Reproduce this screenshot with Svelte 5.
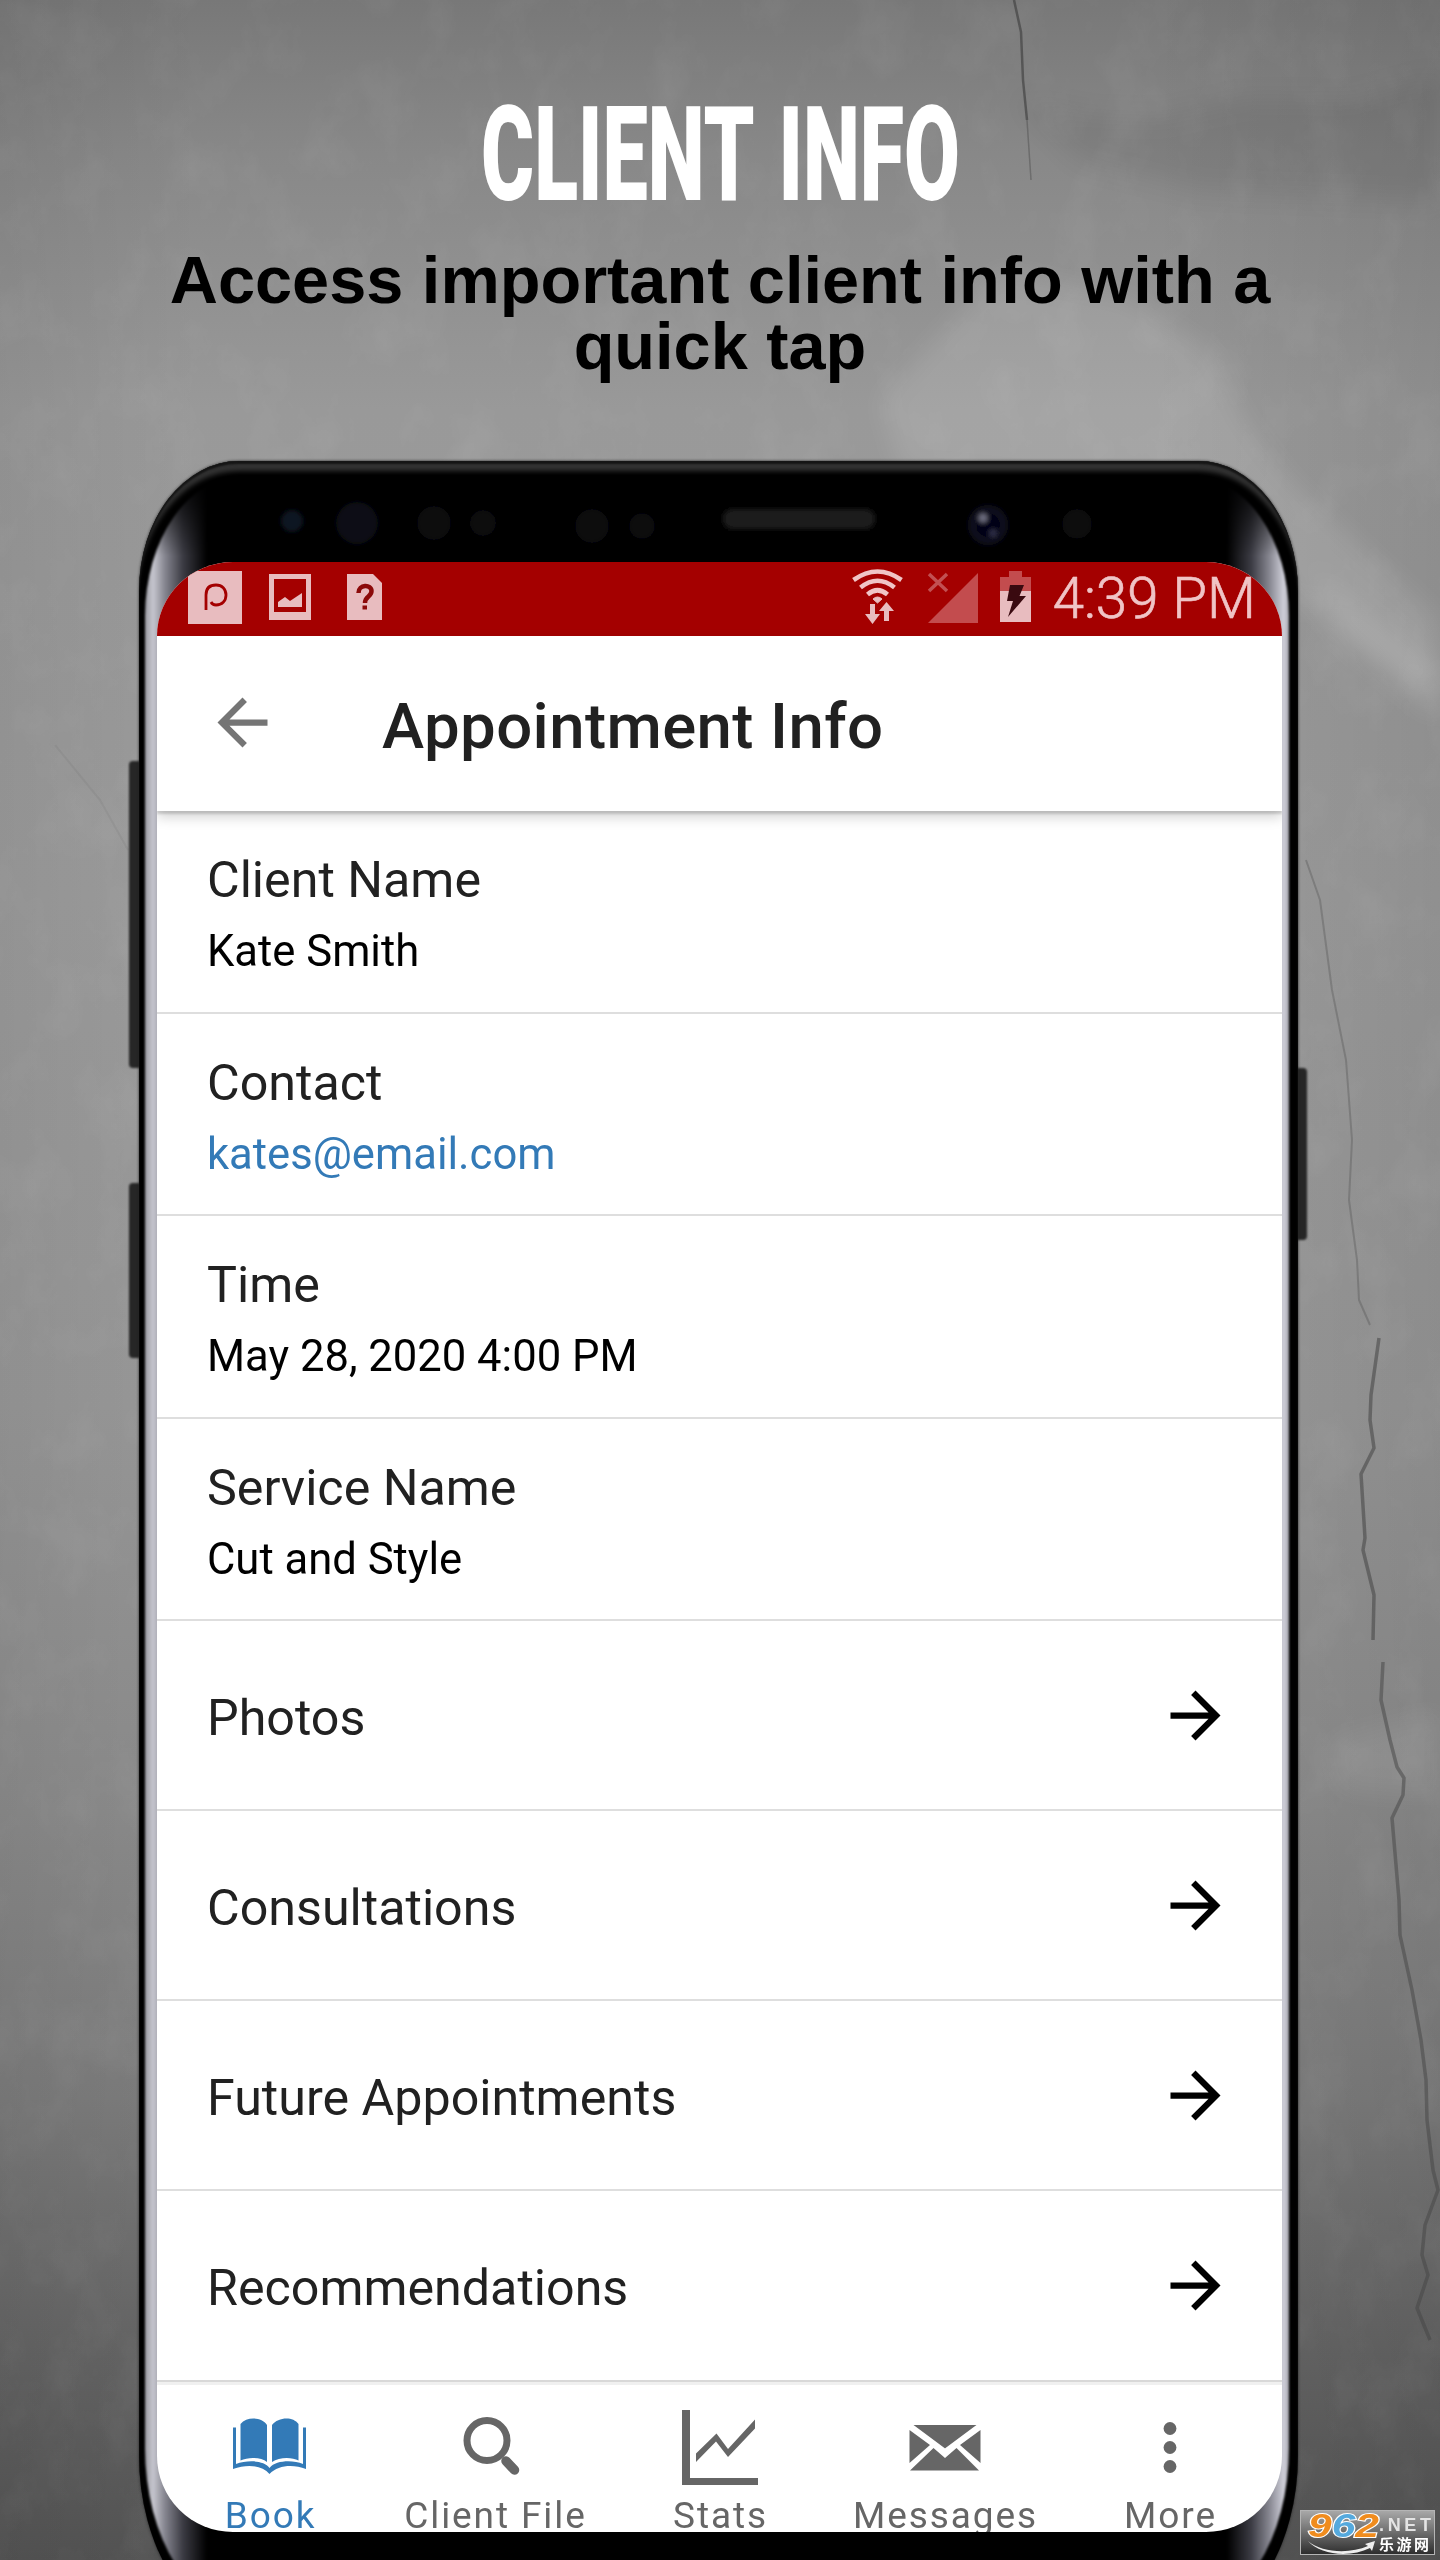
<script lang="ts">
	const details = [
		{ label: 'Client Name', value: 'Kate Smith' },
		{ label: 'Contact', value: 'kates@email.com', link: true },
		{ label: 'Time', value: 'May 28, 2020 4:00 PM' },
		{ label: 'Service Name', value: 'Cut and Style' }
	];

	const sections = ['Photos', 'Consultations', 'Future Appointments', 'Recommendations'];

	const tabs = ['Book', 'Client File', 'Stats', 'Messages', 'More'];

	// front sensors in the top bezel, relative to the phone body
	const sensors = [
		{ x: 153, y: 46, r: 11, color: '#0b1420' },
		{ x: 218, y: 48, r: 21, color: '#090d17' },
		{ x: 295, y: 48, r: 17, color: '#08080f' },
		{ x: 344, y: 48, r: 13, color: '#09090f' },
		{ x: 453, y: 51, r: 17, color: '#08080e' },
		{ x: 503, y: 51, r: 13, color: '#08080d' },
		{ x: 938, y: 49, r: 15, color: '#08080b' }
	];
</script>

<div class="page">
	<svg class="wall" viewBox="0 0 1440 2560" aria-hidden="true">
		<defs>
			<filter id="soft" x="-50%" y="-50%" width="200%" height="200%">
				<feGaussianBlur stdDeviation="12" />
			</filter>
			<filter id="grain" x="0" y="0" width="100%" height="100%">
				<feTurbulence type="fractalNoise" baseFrequency="0.02 0.014" numOctaves="6" seed="8" />
				<feColorMatrix values="0 0 0 0 1  0 0 0 0 1  0 0 0 0 1  1.2 0 0 0 -0.5" />
			</filter>
		</defs>
		<g filter="url(#soft)" fill="#fff">
			<path d="M880 400L1000 270L1130 300L1210 350L1245 420L1290 480L1440 620V700L1330 620L1200 500L900 470Z" opacity="0.11" />
			<path d="M1310 575L1440 665V720L1340 640Z" opacity="0.12" />
			<path d="M1330 1740L1440 1710V1800L1340 1790Z" opacity="0.07" />
			<path d="M1020 100L1090 115L1160 118L1250 98L1350 100L1440 75V200L1200 190L1080 160Z" fill="#000" opacity="0.07" />
		</g>
		<rect width="1440" height="2560" filter="url(#grain)" opacity="0.09" />
		<g class="crack">
			<path d="M1014 0L1021 32L1023 80L1027 120" stroke-width="2.5" opacity="0.7" />
			<path d="M1027 120L1029 150L1031 180" stroke-width="1.500" opacity="0.4" />
			<path d="M1306 860L1320 900L1332 990L1346 1060L1352 1140L1349 1200L1357 1260L1359 1300L1370 1325" stroke-width="2" opacity="0.3" />
			<path d="M1379 1338L1371 1395L1370 1420L1374 1448L1361 1474L1365 1538L1363 1550L1374 1595L1373 1640" stroke-width="3.500" opacity="0.55" />
			<path d="M1383 1662L1381 1700L1390 1740L1397 1767L1404 1778L1403 1795L1392 1818L1399 1900L1400 1935L1412 1990L1421 2040L1426 2080L1427 2120L1433 2170L1438 2190L1425 2225L1422 2255L1428 2275L1417 2308L1430 2340" stroke-width="3.500" opacity="0.5" />
			<path d="M55 745L100 800L128 850" stroke-width="2" opacity="0.08" />
		</g>
	</svg>

	<header>
		<svg class="headline" viewBox="0 0 1440 160" role="img" aria-label="Client info">
			<text x="481" y="131" textLength="479" lengthAdjust="spacingAndGlyphs">CLIENT INFO</text>
		</svg>
		<p>Access important client info with a quick tap</p>
	</header>

	<div class="phone">
		<span class="key volume"></span>
		<span class="key assistant"></span>
		<span class="key power"></span>
		<div class="body">
			<div class="glass"></div>
			<svg class="bezel" viewBox="0 0 1159 102" aria-hidden="true">
				<defs>
					<filter id="lens"><feGaussianBlur stdDeviation="2.5" /></filter>
				</defs>
				<g filter="url(#lens)">
					{#each sensors as s}
						<circle cx={s.x} cy={s.y} r={s.r} fill={s.color} />
					{/each}
					<circle cx="849" cy="50" r="20" fill="#11111c" />
					<circle cx="849" cy="50" r="12" fill="#030312" />
					<circle cx="844" cy="43" r="4" fill="#777789" />
					<circle cx="854" cy="58" r="3.500" fill="#35354f" />
					<rect x="584" y="34" width="152" height="20" rx="9" fill="#1b1b1b" />
				</g>
			</svg>
		</div>

		<div class="screen">
			<div class="status">
				<svg viewBox="157 562 1125 74" aria-hidden="true">
					<g fill="#e8bcbf">
						<path d="M188 571H242V624H188Z" />
						<path d="M269 574H311V620H269ZM274 579V612H306V579Z" fill-rule="evenodd" />
						<path d="M278 607V602L285 597L290 601L302 593V607Z" />
						<path d="M347 574H373L382 583V620H347Z" />
						<path d="M870 604H875V614H880L872.5 624L865 614H870ZM884 621H889V611H894L886.500 602L879 611H884Z" />
						<path d="M877.500 603L882 599Q877.500 595 873 599Z" stroke="#e8bcbf" />
						<path d="M1000 591H1031V622H1000Z" />
					</g>
					<g fill="none" stroke="#f0c4c6" stroke-width="4.600">
						<path d="M853.500 580Q877.500 563 901.500 580" />
						<path d="M860.500 587.500Q877.500 574 894.500 587.500" />
						<path d="M867.500 594.500Q877.500 586 887.500 594.500" />
					</g>
					<path d="M206 610V595C206 587 211 585 216 585C222 585 226 589 226 595C226 601 222 605 216 605C213 605 212 604 211 602" fill="none" stroke="#a40000" stroke-width="2.800" />
					<path d="M358.500 593C358.500 584 371.500 584 371.500 591C371.500 597 365 596 365 603" fill="none" stroke="#8c0a0a" stroke-width="4.500" />
					<path d="M362.500 605.500H367V609.500H362.500Z" fill="#8c0a0a" />
					<path d="M929 574L947 591M947 574L929 591" stroke="#c25052" stroke-width="3.500" />
					<path d="M978 573V623H928Z" fill="#c34c4e" />
					<path d="M1009 571H1022V577H1031V591H1000V577H1009Z" fill="#c34c4e" />
					<path d="M1010 585H1024L1019.500 596H1026L1008 617L1013 601H1007Z" fill="#3a0a10" />
				</svg>
				<span class="clock">4:39 PM</span>
			</div>

			<div class="appbar">
				<svg class="arrow back" viewBox="0 0 24 24" aria-hidden="true">
					<path d="M20 11H7.830l5.590-5.590L12 4l-8 8 8 8 1.410-1.410L7.830 13H20v-2z" />
				</svg>
				<h1>Appointment Info</h1>
			</div>

			<div class="list">
				{#each details as d}
					<div class="detail">
						<span class="label">{d.label}</span>
						<span class="value" class:link={d.link}>{d.value}</span>
					</div>
				{/each}
				{#each sections as name}
					<div class="section">
						<span class="label">{name}</span>
						<svg class="arrow" viewBox="0 0 24 24" aria-hidden="true">
							<path d="M12 4l-1.410 1.410L16.170 11H4v2h12.170l-5.580 5.590L12 20l8-8z" />
						</svg>
					</div>
				{/each}
			</div>

			<nav>
				{#each tabs as tab, i}
					<div class="tab" class:active={i === 0}>
						<svg viewBox="0 0 80 80" aria-hidden="true">
							{#if tab === 'Book'}
								<path d="M10.500 17C17 9 32 10 37 18V55C31 50 18 50 10.500 53.500ZM42 18C48 10 63 9 68.500 17V53.500C62 50 49 50 42 55Z" />
								<path d="M3 20.500H6V57C17 53 34 53 39.500 61C46 53 63 53 73 57V20.500H76V62C63 57 48 58 39.500 67C32 58 17 57 3 62Z" />
							{:else if tab === 'Client File'}
								<circle cx="32" cy="33.500" r="20" fill="none" stroke="currentColor" stroke-width="7" />
								<path d="M51 54L59.500 63" stroke="currentColor" stroke-width="9.500" stroke-linecap="round" />
							{:else if tab === 'Stats'}
								<path d="M2 3H10V71H78V78H2Z" />
								<path d="M16 46.500L36.500 26.500L48 42L75 12.500V21.500L48 50L36 34.500L16 55Z" />
							{:else if tab === 'Messages'}
								<path d="M6 18H74L40 46ZM4.500 23L25 38L4.500 56ZM75.500 23L55 38L75.500 56ZM28.500 41L40 51L51.500 41L74 63.500H5Z" />
								<path d="M3 17L40 44.500L77 17" fill="none" stroke="#fff" stroke-width="5" />
							{:else}
								<circle cx="40" cy="21.500" r="6.400" />
								<circle cx="40" cy="40.500" r="6.400" />
								<circle cx="40" cy="59.500" r="6.400" />
							{/if}
						</svg>
						<span>{tab}</span>
					</div>
				{/each}
			</nav>
		</div>
	</div>

	<svg class="watermark" viewBox="0 0 135 45" aria-hidden="true">
		<defs>
			<linearGradient id="plate" x1="0" y1="0" x2="0" y2="1">
				<stop offset="0" stop-color="#a9a9a9" />
				<stop offset="0.5" stop-color="#6d6d6d" />
				<stop offset="1" stop-color="#2c2c2c" />
			</linearGradient>
		</defs>
		<rect x="0.500" y="0.500" width="134" height="44" fill="url(#plate)" stroke="#b5b5b5" />
		<path d="M8 31C22 43 50 44 68 36L65 34L75 31L72 41L70 38C50 48 20 45 8 31Z" fill="#eee" />
		<text class="digits" x="8" y="27" textLength="71" lengthAdjust="spacingAndGlyphs"><tspan fill="#f08c1e">9</tspan><tspan fill="#55a9dd">6</tspan><tspan fill="#f08c1e">2</tspan></text>
		<text class="net" x="79" y="21" textLength="52">.NET</text>
		<text class="cn" x="79" y="40" textLength="50">乐游网</text>
	</svg>
</div>

<style>
	:global(body) {
		margin: 0;
	}

	.page {
		position: relative;
		width: 1440px;
		height: 2560px;
		overflow: hidden;
		display: flex;
		flex-direction: column;
		font-family: Roboto, 'Liberation Sans', sans-serif;
		background:
			linear-gradient(90deg, rgba(0, 0, 0, 0.06), transparent 14%, transparent 80%, rgba(0, 0, 0, 0.08)),
			linear-gradient(#787878, #888 6%, #999 16%, #9c9c9c 35%, #989898 55%, #8c8c8c 70%, #7c7c7c 82%, #646464 92%, #545454);
	}

	.wall {
		position: absolute;
		inset: 0;
	}

	.crack {
		fill: none;
		stroke: #444;
		stroke-linejoin: round;
	}

	header {
		position: relative;
		height: 460px;
		flex-shrink: 0;
		padding-top: 69px;
		box-sizing: border-box;
		text-align: center;
	}

	.headline {
		display: block;
		width: 1440px;
		height: 160px;
	}

	.headline text {
		font-size: 131px;
		font-weight: 900;
		word-spacing: 10px;
		fill: #fff;
	}

	header p {
		width: 1160px;
		margin: 18px auto 0;
		font: bold 66.700px/66px 'Liberation Sans', Arial, sans-serif;
		color: #000;
	}

	.phone {
		position: relative;
		width: 1163px;
		height: 2165px;
		flex-shrink: 0;
		margin-left: 137px;
		padding: 102px 18px 0 20px;
		box-sizing: border-box;
	}

	.key {
		position: absolute;
		width: 14px;
		background: #262626;
		border-radius: 4px;
		filter: blur(1px);
	}

	.volume {
		left: -8px;
		top: 301px;
		height: 307px;
	}

	.assistant {
		left: -8px;
		top: 723px;
		height: 175px;
	}

	.power {
		right: -7px;
		top: 608px;
		height: 172px;
	}

	.body {
		position: absolute;
		inset: 1px 2px 0;
		overflow: hidden;
		background: #000;
		border-radius: 100px 100px 110px 110px / 130px 130px 170px 170px;
		box-shadow:
			inset 0 3px 2px #151515,
			inset 0 13px 5px -3px #333,
			0 0 3px #222;
	}

	.glass {
		position: absolute;
		inset: 15px 9px 12px 6px;
		border-radius: 98px 98px 105px 105px / 140px 140px 165px 165px;
		background:
			linear-gradient(#000 0, transparent 80px),
			linear-gradient(90deg, #9b9ba3 0, #c6c6ce 8px, #85858f 20px, #3b3b43 38px, #000 62px, #000 calc(100% - 62px), #3b3b43 calc(100% - 38px), #85858f calc(100% - 20px), #d0d0da calc(100% - 5px), #a5a5ad);
		filter: blur(1px);
	}

	.bezel {
		position: absolute;
		left: 0;
		top: 14px;
		width: 1159px;
		height: 102px;
	}

	.screen {
		position: relative;
		width: 1125px;
		height: 1970px;
		overflow: hidden;
		display: flex;
		flex-direction: column;
		background: #fff;
		border-radius: 76px 76px 76px 76px / 74px 74px 76px 76px;
	}

	.status {
		position: relative;
		height: 74px;
		flex-shrink: 0;
		display: flex;
		align-items: center;
		justify-content: flex-end;
		padding-right: 26px;
		background: #a40000;
	}

	.status svg {
		position: absolute;
		inset: 0;
		width: 1125px;
		height: 74px;
	}

	.clock {
		position: relative;
		font-size: 56.500px;
		font-weight: 300;
		line-height: 76px;
		color: #f0c4c6;
		-webkit-text-stroke: 0.600px #f0c4c6;
	}

	.appbar {
		position: relative;
		height: 175px;
		flex-shrink: 0;
		display: flex;
		align-items: center;
		gap: 100px;
		padding-left: 48px;
		background: #fff;
		box-shadow:
			0 3px 2px rgba(0, 0, 0, 0.14),
			0 6px 12px rgba(0, 0, 0, 0.18);
	}

	.appbar h1 {
		margin: 6px 0 0 2px;
		font-size: 63.500px;
		font-weight: 500;
		letter-spacing: 0.400px;
		line-height: 1;
		color: #212121;
	}

	.arrow {
		width: 75px;
		height: 75px;
		fill: #000;
	}

	.back {
		fill: #757575;
		margin-top: -2px;
	}

	.list {
		display: flex;
		flex-direction: column;
		flex-shrink: 0;
	}

	.detail {
		display: flex;
		flex-direction: column;
		height: 202.500px;
		box-sizing: border-box;
		padding: 39px 50px 0;
		border-bottom: 2px solid #dedede;
	}

	.label {
		font-size: 50.200px;
		line-height: 60px;
		color: #212121;
	}

	.value {
		margin-top: 12px;
		font-size: 43.600px;
		line-height: 60px;
		color: #000;
	}

	.link {
		color: #337ab7;
	}

	.section {
		display: flex;
		align-items: center;
		justify-content: space-between;
		height: 190px;
		box-sizing: border-box;
		padding: 0 49px 0 50px;
		border-bottom: 2px solid #dedede;
	}

	.section .label {
		margin-top: 5px;
	}

	.section:last-child {
		height: 189px;
		border-bottom: 0;
	}

	nav {
		display: grid;
		grid-template-columns: repeat(5, 1fr);
		flex: 1;
		border-top: 2px solid #d8d8d8;
		box-shadow: inset 0 3px #f0f0f0;
	}

	.tab {
		display: flex;
		flex-direction: column;
		align-items: center;
		padding-top: 25px;
		color: #666;
	}

	.tab svg {
		width: 80px;
		height: 80px;
		fill: currentColor;
	}

	.tab span {
		margin: 6px 0 0 2px;
		font-size: 37px;
		line-height: 46px;
		letter-spacing: 1.900px;
		white-space: nowrap;
	}

	.active {
		color: #337ab7;
	}

	.watermark {
		position: absolute;
		left: 1300px;
		top: 2510px;
		width: 135px;
		height: 45px;
	}

	.digits {
		font: italic bold 33px 'Liberation Sans', sans-serif;
		stroke: #fff;
		stroke-width: 2px;
		paint-order: stroke;
	}

	.net {
		font: bold 18px 'Liberation Sans', sans-serif;
		fill: #e4e4e4;
	}

	.cn {
		font: bold 15px 'Noto Sans CJK SC', sans-serif;
		fill: #fff;
	}
</style>
